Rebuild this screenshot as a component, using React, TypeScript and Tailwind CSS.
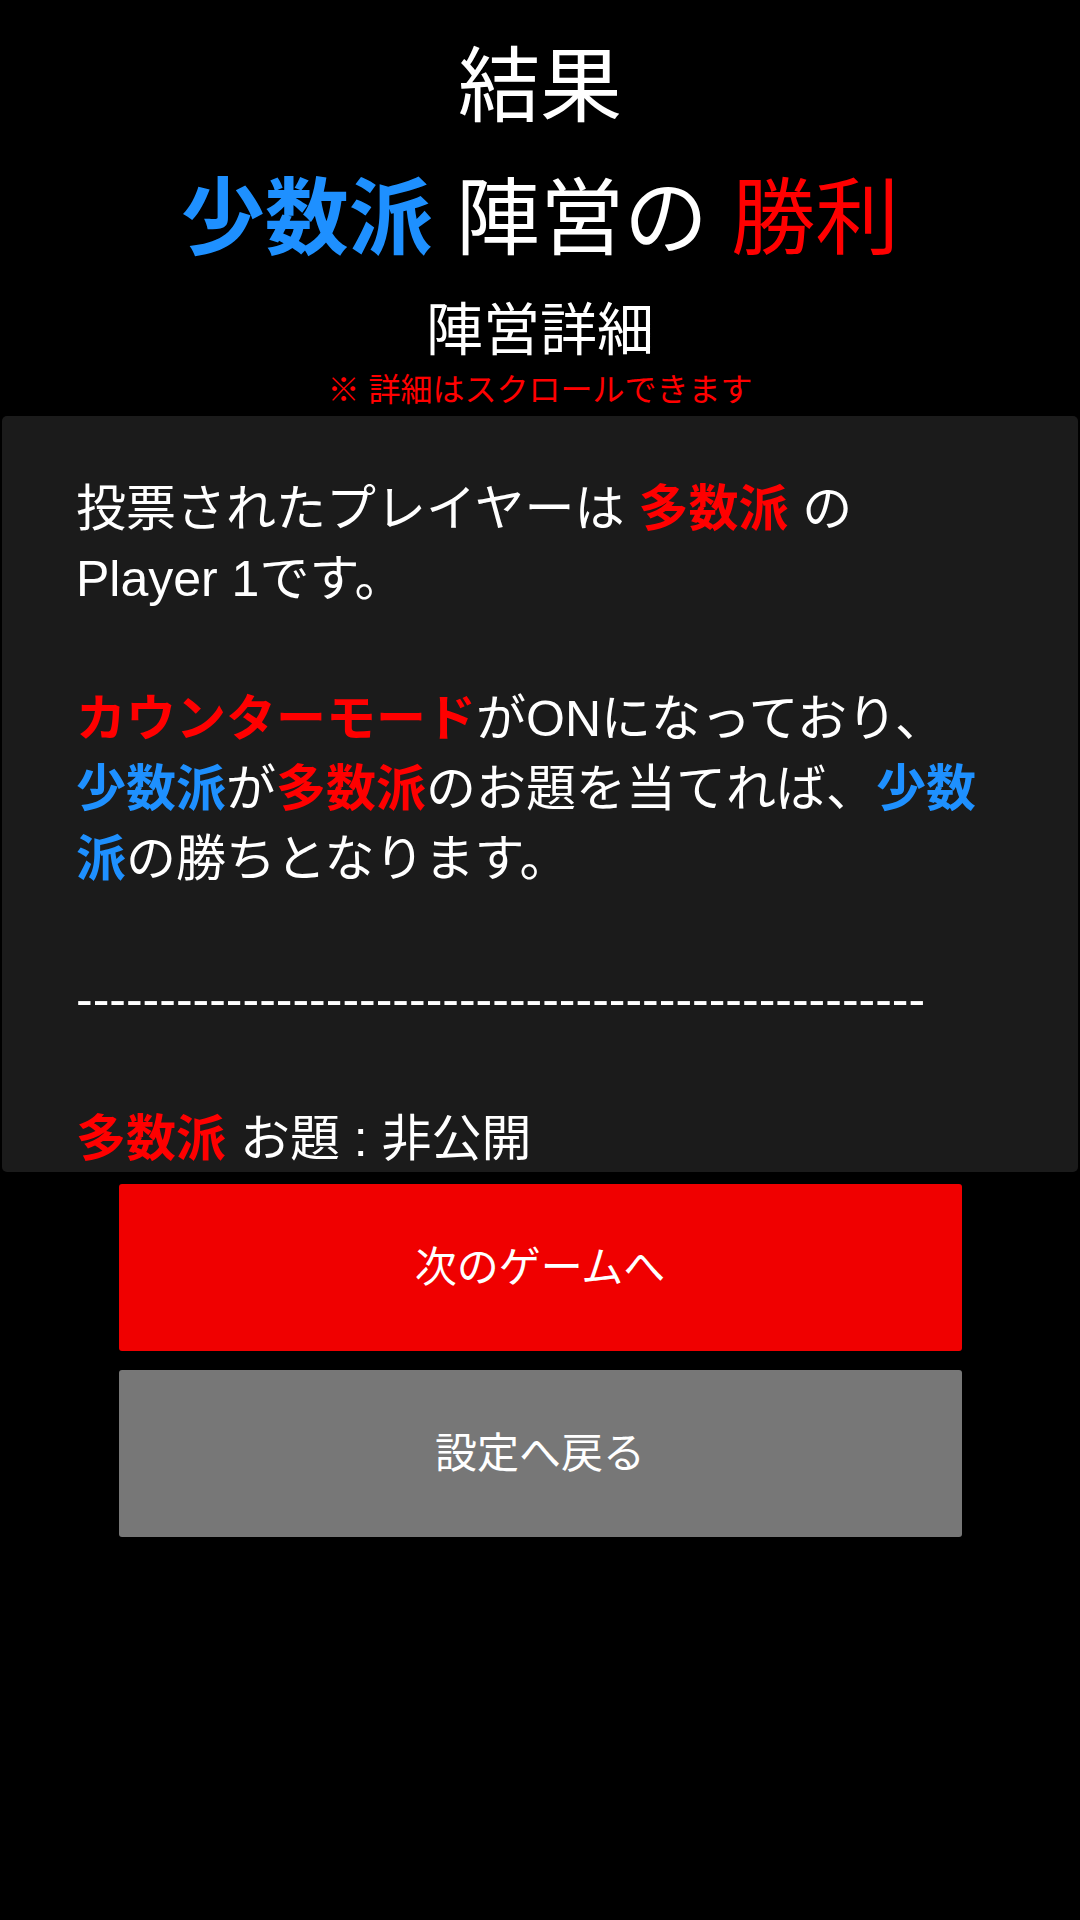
import React from 'react';

const RED = 'text-[#ff0000]';
const RED_B = 'text-[#ff0000] font-bold';
const BLUE_B = 'text-[#1e90ff] font-bold';

const ResultHeader: React.FC = () => {
  return (
    <div className="flex flex-col items-center pt-[47px]">
      <div className="h-[80px] flex items-center text-[82px] leading-[80px] text-white">結果</div>
      <div className="mt-[47px] h-[90px] flex items-center text-[84px] leading-[90px] text-white whitespace-nowrap">
        <span className={BLUE_B}>少数派</span>&nbsp;陣営の&nbsp;<span className={RED}>勝利</span>
      </div>
      <div className="mt-[36px] h-[60px] flex items-center text-[57px] leading-[60px] text-white">陣営詳細</div>
      <div className="mt-[12px] h-[36px] flex items-center text-[32px] leading-[36px] text-[#ff0000]">
        ※&nbsp;詳細はスクロールできます
      </div>
    </div>
  );
};

const DetailPanel: React.FC = () => {
  const dashes = '-'.repeat(51);
  return (
    <div className="mt-[8px] mx-[2px] h-[756px] overflow-hidden rounded-[5px] bg-[#1b1b1b] pl-[74px] pr-[76px] pt-[58px]">
      <div className="text-[50px] leading-[70px] text-white">
        <p>
          投票されたプレイヤーは <span className={RED_B}>多数派</span> の<br />
          Player 1です。
        </p>
        <p className="h-[70px]" />
        <p>
          <span className={RED_B}>カウンターモード</span>がONになっており、<br />
          <span className={BLUE_B}>少数派</span>が<span className={RED_B}>多数派</span>のお題を当てれば、
          <span className={BLUE_B}>少数</span>
          <br />
          <span className={BLUE_B}>派</span>の勝ちとなります。
        </p>
        <p className="h-[70px]" />
        <p>{dashes}</p>
        <p className="h-[70px]" />
        <p>
          <span className={RED_B}>多数派</span> お題 : 非公開
        </p>
      </div>
    </div>
  );
};

const App: React.FC = () => {
  return (
    <div
      className="min-h-[1920px] w-[1080px] bg-black"
      style={{ fontFamily: '"Liberation Sans", "Noto Sans CJK JP", sans-serif' }}
    >
      <ResultHeader />
      <DetailPanel />
      <div className="mt-[12px] flex flex-col items-center gap-[19px]">
        <button className="h-[167px] w-[843px] rounded-[3px] bg-[#f00000] text-[42px] text-white">
          次のゲームへ
        </button>
        <button className="h-[167px] w-[843px] rounded-[3px] bg-[#777777] text-[42px] text-white">
          設定へ戻る
        </button>
      </div>
    </div>
  );
};

export default App;
